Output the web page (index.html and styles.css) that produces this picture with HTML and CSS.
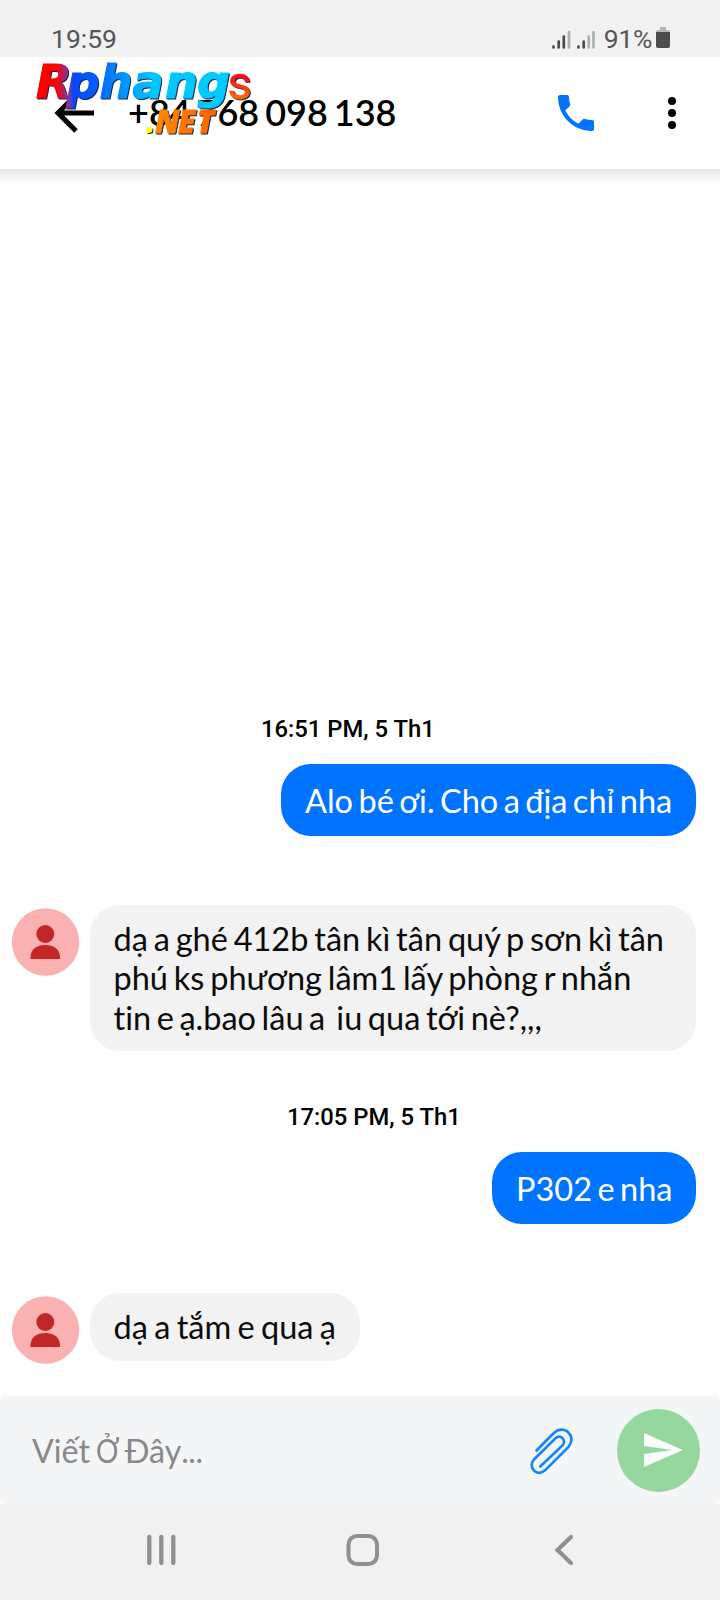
FILE: index.html
```html
<!DOCTYPE html>
<html lang="vi">
<head>
<meta charset="utf-8">
<title>+84 768 098 138</title>
<link rel="stylesheet" href="styles.css">
</head>
<body>
<div class="phone">
  <div class="status">
    <span class="clock">19:59</span>
    <div class="indicators">
      <svg class="signals" width="44" height="20" viewBox="0 0 44 20" fill="none" stroke-width="2.7" stroke-linecap="round">
        <path stroke="#4c4c4c" d="M1.5 17.5V16.5M6.7 17.5V11.5M11.8 17.5V6.5M26.5 17.5V16.5M31.7 17.5V11.5"/>
        <path stroke="#b0b0b0" d="M17 17.5V2M36.700 17.500V6.500M41.500 17.500V2"/>
      </svg>
      <span class="percent">91%</span>
      <svg class="battery" width="14" height="22" viewBox="0 0 14 22"><path fill="#b5b5b5" d="M4 0h6v3h2q2 0 2 2v2H0V5q0-2 2-2h2z"/><path fill="#4c4c4c" d="M0 5h14v14q0 2-2 2H2q-2 0-2-2z"/></svg>
    </div>
  </div>

  <header class="header">
    <svg class="back" width="42" height="40" viewBox="0 0 42 40" fill="none" stroke="#000" stroke-width="5"><path d="M40 20H4M22 2L4 20l18 18"/></svg>
    <h1 class="title">+84 768 098 138</h1>
    <svg class="call" width="36" height="36" viewBox="3 3 18 18"><path fill="#0074ff" d="M6.620 10.790c1.440 2.830 3.760 5.140 6.590 6.590l2.200-2.200c.27-.27.67-.36 1.020-.24 1.120.37 2.330.57 3.570.57.550 0 1 .45 1 1V20c0 .55-.45 1-1 1-9.390 0-17-7.610-17-17 0-.55.450-1 1-1h3.500c.55 0 1 .45 1 1 0 1.250.2 2.450.57 3.570.11.35.030.740-.25 1.020z"/></svg>
    <svg class="more" width="8" height="32" viewBox="0 0 8 32"><circle cx="4" cy="4" r="4"/><circle cx="4" cy="16" r="4"/><circle cx="4" cy="28" r="4"/></svg>
    <svg class="logo" width="230" height="85" viewBox="30 55 230 85">
      <defs>
        <linearGradient id="brand" gradientUnits="userSpaceOnUse" x1="37" y1="0" x2="229" y2="0">
          <stop offset="0" stop-color="#f00"/><stop offset=".1" stop-color="#f00"/><stop offset=".17" stop-color="#7937b0"/><stop offset=".19" stop-color="#0647ff"/><stop offset=".31" stop-color="#075dff"/><stop offset=".4" stop-color="#0084ff"/><stop offset=".6" stop-color="#00c5ff"/><stop offset="1" stop-color="#0cf"/>
        </linearGradient>
        <linearGradient id="ess" gradientUnits="userSpaceOnUse" x1="0" y1="73" x2="0" y2="99"><stop offset=".2" stop-color="#f5101a"/><stop offset=".9" stop-color="#ff6500"/></linearGradient>
        <linearGradient id="net" gradientUnits="userSpaceOnUse" x1="156" y1="0" x2="217" y2="0"><stop offset="0" stop-color="#ff8a00"/><stop offset="1" stop-color="#ff6200"/></linearGradient>
      </defs>
      <text class="brand" y="97.500" x="36 66.500 99.500 132.500 165 197" fill="url(#brand)" stroke="url(#brand)">Rphang</text>
      <text class="brand-end" x="227.500" y="98.500" fill="url(#ess)" stroke="url(#ess)">s</text>
      <text class="domain" x="146" y="133"><tspan fill="#ff0">.</tspan><tspan x="155 178 197" fill="url(#net)" stroke="url(#net)">NET</tspan></text>
    </svg>
  </header>

  <main class="chat">
    <time class="date">16:51 PM, 5 Th1</time>
    <div class="bubble sent first">Alo bé ơi. Cho a địa chỉ nha</div>
    <div class="row">
      <svg class="avatar" width="68" height="68" viewBox="0 0 68 68"><circle cx="33.600" cy="34" r="33.700" fill="#f9b1b2"/><circle cx="33.300" cy="26" r="9" fill="#c22626"/><path fill="#c22626" d="M18.500 51v-1.500C18.500 41 25 37 33.300 37S48 41 48 49.500V51z"/></svg>
      <div class="bubble received">dạ a ghé 412b tân kì tân quý p sơn kì tân<br>phú ks phương lâm1 lấy phòng r nhắn<br><span class="tight">tin e ạ.bao lâu a&nbsp; iu qua tới nè?,,,</span></div>
    </div>
    <time class="date second">17:05 PM, 5 Th1</time>
    <div class="bubble sent last">P302 e nha</div>
    <div class="row">
      <svg class="avatar" width="68" height="68" viewBox="0 0 68 68"><circle cx="33.600" cy="34" r="33.700" fill="#f9b1b2"/><circle cx="33.300" cy="26" r="9" fill="#c22626"/><path fill="#c22626" d="M18.500 51v-1.500C18.500 41 25 37 33.300 37S48 41 48 49.500V51z"/></svg>
      <div class="bubble received short">dạ a tắm e qua ạ</div>
    </div>
  </main>

  <footer class="composer">
    <div class="composer-box">
      <span class="placeholder">Viết <span class="narrow">Ở</span> Đây<span class="dots">...</span></span>
      <svg class="clip" width="44" height="50" viewBox="0 0 44 50" fill="none" stroke="#0d86fa" stroke-width="2.600" stroke-linecap="round"><path d="M6.500 24.500L23.300 7.500Q30 1.200 37 5.200Q45 12 38.500 21L15.600 43.800Q10 49 4.700 45.200Q-1 39.500 4 33.500L25.400 12.400Q29 9 32.500 12Q35.500 15.500 32.500 19.500L10.300 40.500"/></svg>
      <div class="send"><svg width="40" height="34" viewBox="0 0 40 34"><path fill="#f9faf9" d="M0 0L39 17L0 34V21L28 17L0 13z"/></svg></div>
    </div>
  </footer>

  <nav class="nav">
    <svg width="240" height="96" viewBox="0 0 240 96" fill="none" stroke="#909090" stroke-width="4.300" stroke-linecap="round"><path d="M149.300 33v26M161.300 33v26M173.300 33v26"/></svg>
    <svg width="240" height="96" viewBox="240 0 240 96" fill="none" stroke="#909090" stroke-width="4"><rect x="348.500" y="32" width="28.500" height="28" rx="8.500"/></svg>
    <svg width="240" height="96" viewBox="480 0 240 96" fill="none" stroke="#909090" stroke-width="4.200" stroke-linecap="round"><path d="M571 33L557.500 46L571 59"/></svg>
  </nav>
</div>
</body>
</html>
```
FILE: styles.css
```css
* { box-sizing: border-box; }
body { margin: 0; background: #fefefe; font-family: Lato, "Noto Sans", sans-serif; color: #111; font-variant-ligatures: none; }
svg { display: block; flex: none; }
.phone { width: 720px; height: 1600px; display: flex; flex-direction: column; overflow: hidden; }

.status { height: 57px; flex: none; background: #f1f1f1; display: flex; justify-content: space-between; padding: 22px 50px 0 51px; color: #555; font: 26.500px/34px Roboto, sans-serif; }
.indicators { display: flex; align-items: flex-start; }
.signals { margin: 8px 8px 0 0; }
.percent { letter-spacing: -.3px; }
.battery { margin: 5px 0 0 4px; }

.header { position: relative; height: 112px; flex: none; background: #fff; display: flex; align-items: center; padding-left: 54px; }
.title { margin: -2px 0 0 32px; width: 430px; font-size: 36px; line-height: 44px; font-weight: 600; word-spacing: -3px; color: #000; white-space: nowrap; }
.more { margin-left: 74px; }
.logo { position: absolute; left: 30px; top: -2px; overflow: visible; filter: drop-shadow(1px 1px .500px #16284a); }
.brand { font: italic bold 46px "DejaVu Sans", sans-serif; stroke-width: 1.200px; }
.brand-end { font: 400 47px Roboto, sans-serif; stroke-width: .6px; }
.domain { font: italic 800 31px "Open Sans", sans-serif; stroke-width: .8px; }

.chat { flex: 1; display: flex; flex-direction: column; padding: 545px 24px 0 12px; background: linear-gradient(#e6e6e6, #f6f6f6 9px, #fefefe 18px); }
.date { font: 500 23.800px/30px Roboto, sans-serif; color: #000; margin-left: 249px; white-space: nowrap; }
.bubble { border-radius: 30px; font-size: 32.500px; line-height: 39.300px; word-spacing: -2.500px; white-space: nowrap; }
.sent { align-self: flex-end; height: 72px; margin-top: 20px; padding: 16.500px 24px 0; background: #0074ff; color: #fff; word-spacing: -2.900px; }
.first { width: 415px; }
.last { width: 204px; }
.row { display: flex; gap: 9.500px; margin-top: 69px; }
.avatar { margin-top: 3px; }
.received { width: 606.500px; height: 146px; padding: 14px 24px; background: #f2f2f2; color: #0b0b0b; }
.tight { word-spacing: -2.750px; }
.date.second { margin: 51px 0 0 275px; }
.short { width: 270.500px; height: 68px; word-spacing: -2px; }

.composer { height: 108px; flex: none; background: #fff; }
.composer-box { height: 108px; background: #f4f5f7; border-radius: 5px; display: flex; align-items: center; padding: 0 20.500px 0 32px; }
.placeholder { flex: 1; font-size: 32.200px; word-spacing: -2.500px; color: #888; white-space: nowrap; }
.narrow { display: inline-block; transform: scaleX(.87); transform-origin: left; margin-right: -4px; }
.dots { letter-spacing: -.5px; }
.clip { margin: 2px 42.500px 0 0; }
.send { width: 83px; height: 83px; border-radius: 50%; background: #96d79e; display: flex; align-items: center; padding-left: 27px; }
.nav { height: 96px; flex: none; background: #f1f1f1; display: flex; }
```
